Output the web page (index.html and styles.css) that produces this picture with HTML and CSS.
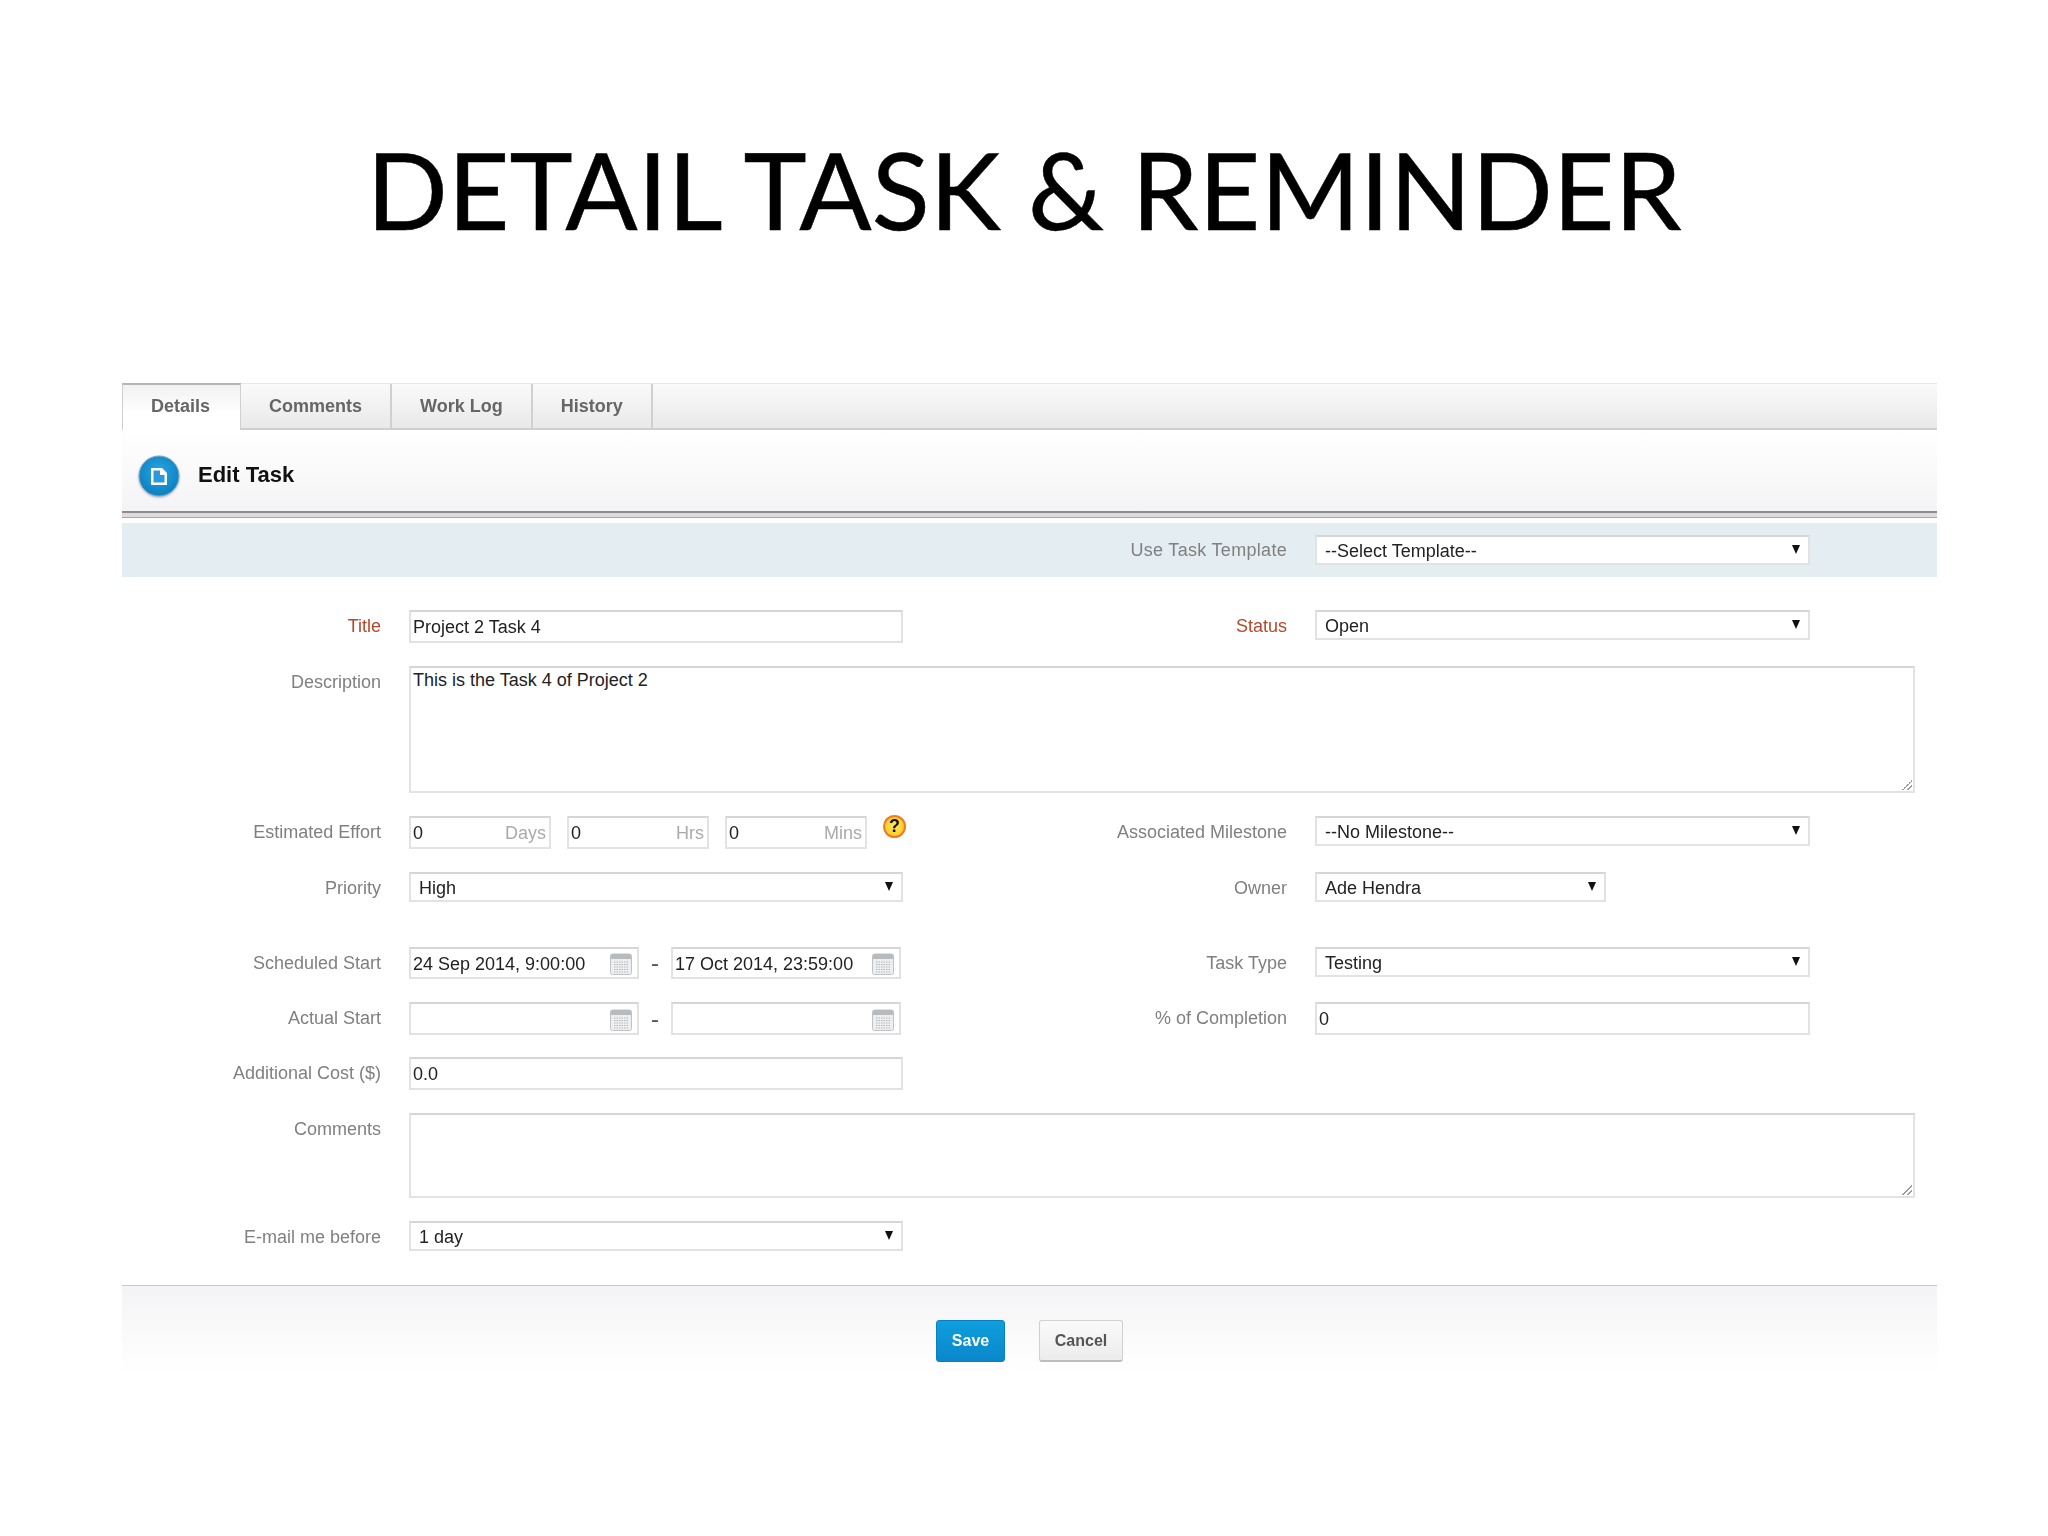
FILE: index.html
```html
<!DOCTYPE html>
<html lang="en">
<head>
  <meta charset="UTF-8">
  <title>Detail Task &amp; Reminder</title>
  <link rel="stylesheet" href="styles.css">
</head>
<body>

<h1 class="slide-title">DETAIL TASK &amp; REMINDER</h1>

<div class="panel">
  <div class="tabs">
    <div class="tab active">Details</div>
    <div class="tab">Comments</div>
    <div class="tab">Work Log</div>
    <div class="tab">History</div>
  </div>

  <div class="panel-head">
    <svg class="head-icon" viewBox="0 0 42 42">
      <defs>
        <radialGradient id="ball" cx="50%" cy="40%" r="60%">
          <stop offset="0" stop-color="#2ba6e2"/>
          <stop offset="1" stop-color="#0b7fc0"/>
        </radialGradient>
      </defs>
      <circle cx="21" cy="21" r="20" fill="url(#ball)" stroke="#7fa9c4" stroke-width="1"/>
      <path d="M13 13h11l5 5v12h-16z" fill="#fff"/>
      <path d="M15.500 15.500h6.500v4.500h4.500v7.500h-11z" fill="#2b9ad8"/>
    </svg>
    <div class="head-title">Edit Task</div>
  </div>
  <div class="head-rule"></div>

  <div class="template-band">
    <div class="label">Use Task Template</div>
    <div class="select wide">--Select Template--</div>
  </div>

  <div class="form">
    <div class="label required">Title</div>
    <div class="input">Project 2 Task 4</div>
    <div class="label required">Status</div>
    <div class="select wide">Open</div>

    <div class="label">Description</div>
    <div class="input textarea desc">This is the Task 4 of Project 2<span class="grip"></span></div>

    <div class="label">Estimated Effort</div>
    <div class="effort">
      <div class="input unit">0<span>Days</span></div>
      <div class="input unit">0<span>Hrs</span></div>
      <div class="input unit">0<span>Mins</span></div>
      <div class="help">?</div>
    </div>
    <div class="label">Associated Milestone</div>
    <div class="select wide">--No Milestone--</div>

    <div class="label">Priority</div>
    <div class="select gap-after">High</div>
    <div class="label">Owner</div>
    <div class="select owner">Ade Hendra</div>

    <div class="label">Scheduled Start</div>
    <div class="dates">
      <div class="input date short">24 Sep 2014, 9:00:00<svg class="cal"><use href="#cal"/></svg></div>
      <div class="dash">-</div>
      <div class="input date short">17 Oct 2014, 23:59:00<svg class="cal"><use href="#cal"/></svg></div>
    </div>
    <div class="label">Task Type</div>
    <div class="select wide">Testing</div>

    <div class="label pull-up">Actual Start</div>
    <div class="dates pull-up">
      <div class="input date"><svg class="cal"><use href="#cal"/></svg></div>
      <div class="dash">-</div>
      <div class="input date"><svg class="cal"><use href="#cal"/></svg></div>
    </div>
    <div class="label pull-up">% of Completion</div>
    <div class="input wide pull-up">0</div>

    <div class="label pull-up">Additional Cost ($)</div>
    <div class="input pull-up">0.0</div>

    <div class="label row-start">Comments</div>
    <div class="input textarea notes"><span class="grip"></span></div>

    <div class="label">E-mail me before</div>
    <div class="select">1 day</div>
  </div>

  <div class="actions">
    <div class="btn save">Save</div>
    <div class="btn cancel">Cancel</div>
  </div>
</div>

<svg class="defs" width="0" height="0">
  <symbol id="cal" viewBox="0 0 22 22">
    <rect x="0.500" y="1" width="21" height="20.500" rx="2" fill="#eceef0" stroke="#c0c3c6"/>
    <path d="M1 3a2 2 0 0 1 2-2h16a2 2 0 0 1 2 2v3h-20z" fill="#b8bbbe"/>
    <path d="M4 9h14M4 11.500h14M4 14h14M4 16.500h14M4 19h14" stroke="#b7babd" stroke-width="1.200" stroke-dasharray="1.500 1"/>
  </symbol>
</svg>

</body>
</html>
```

FILE: styles.css
```css
body {
  margin: 0;
  background-color: #fff;
  font-family: "Liberation Sans", Arial, sans-serif;
  font-size: 18px;
  color: #222;
}

.slide-title {
  margin: 0;
  height: 383px;
  padding-top: 119px;
  box-sizing: border-box;
  font-family: Lato, sans-serif;
  font-size: 107px;
  font-weight: 400;
  line-height: 140px;
  text-align: center;
  color: #000;
  -webkit-text-stroke: 0.5px #000;
}

.panel {
  width: 1815px;
  margin-left: 122px;
  filter: blur(0.4px);
}

.tabs {
  display: flex;
  height: 47px;
  box-sizing: border-box;
  border-top: 1px solid #e8e8e8;
  border-bottom: 2px solid #cfcfcf;
  background: linear-gradient(#fafafa, #e9e9e9);
}
.tab {
  padding: 0 28px;
  line-height: 44px;
  font-weight: bold;
  color: #666;
  border-right: 2px solid #d0d0d0;
}
.tab.active {
  height: 47px;
  margin-top: -1px;
  padding: 0 30px 0 28px;
  box-sizing: border-box;
  border-top: 2px solid #b5b5b5;
  border-left: 1px solid #d0d0d0;
  border-right: 1px solid #d0d0d0;
  background: linear-gradient(#f1f1f1, #fff 60%);
  line-height: 42px;
}

.panel-head {
  display: flex;
  align-items: center;
  gap: 18px;
  height: 81px;
  padding-left: 16px;
  box-sizing: border-box;
  background: linear-gradient(#fff, #f4f4f6);
}
.head-icon {
  width: 42px;
  height: 42px;
  margin-top: 11px;
  filter: drop-shadow(0 1px 1px rgba(0, 0, 0, 0.3));
}
.head-title {
  font-size: 22px;
  font-weight: bold;
  color: #111;
  margin-top: 8px;
}
.head-rule {
  height: 4px;
  border-top: 2px solid #8c8c8c;
  border-bottom: 1px solid #a8a8a8;
  background-color: #dcdcdc;
}

.template-band {
  display: flex;
  justify-content: flex-end;
  align-items: center;
  gap: 28px;
  height: 54px;
  margin-top: 5px;
  padding-right: 127px;
  box-sizing: border-box;
  background-color: #e4edf1;
}
.template-band .label {
  letter-spacing: 0.3px;
}

.label {
  text-align: right;
  color: #808080;
  line-height: 33px;
}
.label.required {
  color: #b5482a;
}
.row-start {
  grid-column: 1;
}
.pull-up {
  margin-top: -1px;
}

.form {
  display: grid;
  grid-template-columns: 259px 494px 356px 600px;
  column-gap: 28px;
  row-gap: 23px;
  align-items: start;
  padding-top: 33px;
}

.input, .select {
  display: flex;
  align-items: center;
  box-sizing: border-box;
  background-color: #fff;
  color: #222;
  border: 2px solid #e2e2e2;
  border-top-color: #d6d6d6;
}
.input {
  height: 33px;
  padding: 2px 3px 0 2px;
}
.select {
  justify-content: space-between;
  height: 30px;
  padding: 2px 8px 0 8px;
}
.select::after {
  content: "";
  border-left: 4px solid transparent;
  border-right: 4px solid transparent;
  border-top: 9px solid #111;
  margin-top: -4px;
}
.wide {
  width: 495px;
}
.owner {
  width: 291px;
}
.gap-after {
  margin-bottom: 22px;
}

.textarea {
  position: relative;
  align-items: flex-start;
  grid-column: 2 / 5;
  padding-top: 2px;
}
.desc {
  height: 127px;
}
.notes {
  height: 85px;
}
.grip {
  position: absolute;
  right: 1px;
  bottom: 1px;
  width: 10px;
  height: 10px;
  background: linear-gradient(135deg, transparent 50%, #999 50%, #999 58%, transparent 58%, transparent 74%, #999 74%, #999 82%, transparent 82%);
}

.effort {
  display: flex;
  gap: 16px;
}
.unit {
  flex: none;
  justify-content: space-between;
  width: 142px;
  color: #222;
}
.unit span {
  color: #aaa;
}
.help {
  flex: none;
  width: 23px;
  height: 23px;
  margin-top: -1px;
  box-sizing: border-box;
  border: 2px solid #ee7a22;
  border-radius: 50%;
  background: radial-gradient(#ffe45c, #fcc419);
  font-size: 18px;
  font-weight: bold;
  line-height: 19px;
  text-align: center;
  color: #111;
}

.dates {
  display: flex;
  align-items: center;
}
.date {
  justify-content: space-between;
  width: 230px;
  padding-right: 5px;
}
.date.short {
  height: 32px;
}
.dash {
  width: 32px;
  font-size: 24px;
  line-height: 24px;
  text-align: center;
  color: #555;
}
.date .cal {
  margin-left: auto;
}
.cal {
  width: 22px;
  height: 22px;
}
.defs {
  position: absolute;
}

.actions {
  display: flex;
  justify-content: center;
  gap: 34px;
  height: 76px;
  margin-top: 31px;
  padding-top: 34px;
  border-top: 1px solid #c8c8c8;
  background: linear-gradient(#f4f4f6, #fff 80%);
}
.btn {
  height: 42px;
  box-sizing: border-box;
  border-radius: 3px;
  font-size: 16px;
  font-weight: bold;
  line-height: 40px;
  text-align: center;
}
.save {
  width: 69px;
  background: linear-gradient(#0e9fdc, #0b86cb);
  border: 1px solid #0a80c4;
  color: #fff;
}
.cancel {
  width: 84px;
  background: linear-gradient(#fafafa, #ececec);
  border: 1px solid #d0d0d0;
  border-bottom: 2px solid #bdbdbd;
  color: #555;
}
```
